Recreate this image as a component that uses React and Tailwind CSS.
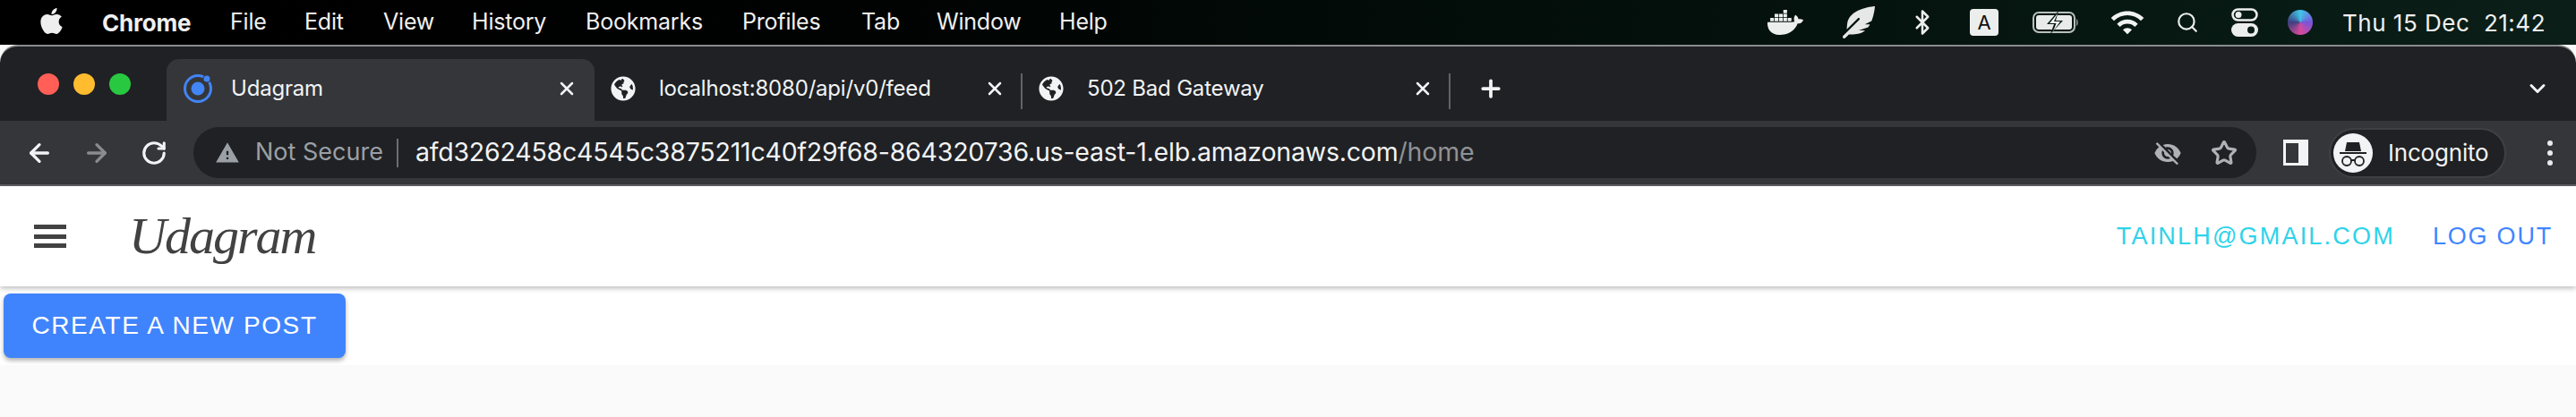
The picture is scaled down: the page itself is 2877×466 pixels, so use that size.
import React from 'react';
import { X, Plus, ChevronDown, ArrowLeft, ArrowRight, RotateCw, Star, Bluetooth, Search } from 'lucide-react';
import { FaApple, FaDocker, FaGlobeAmericas, FaFeatherAlt } from 'react-icons/fa';
import { MdWarning, MdVisibilityOff, MdWifi } from 'react-icons/md';

const menuItems = [
  { label: 'File', w: 'w-[41px]' },
  { label: 'Edit', w: 'w-[46px]' },
  { label: 'View', w: 'w-[57px]' },
  { label: 'History', w: 'w-[85px]' },
  { label: 'Bookmarks', w: 'w-[133px]' },
  { label: 'Profiles', w: 'w-[91px]' },
  { label: 'Tab', w: 'w-[42px]' },
  { label: 'Window', w: 'w-[95px]' },
  { label: 'Help', w: 'w-[55px]' },
];

const IonicIcon = () => (
  <svg width="34" height="34" viewBox="0 0 34 34" fill="none">
    <circle cx="17" cy="17" r="14.5" stroke="#4285f4" strokeWidth="3" />
    <circle cx="17" cy="17" r="7.5" fill="#4285f4" />
    <circle cx="27" cy="6" r="4.5" fill="#35363a" />
    <circle cx="27" cy="6" r="3.5" fill="#4285f4" />
  </svg>
);

const Battery = () => (
  <svg width="52" height="26" viewBox="0 0 52 26" fill="none">
    <rect x="1" y="2" width="46" height="22" rx="6" stroke="#b8c0bc" strokeWidth="2" />
    <rect x="4" y="5" width="40" height="16" rx="3" fill="#e8ebe9" />
    <path d="M49 9c2 1 2.500 7 0 8z" fill="#8f9693" />
    <path d="M29 0 L16 15 H24 L20 26 L34 11 H26 Z" fill="#0b1d16" />
    <path d="M28 3 L19 14 H26.500 L23 23 L31 12 H24 Z" fill="#f0f2f1" />
  </svg>
);

const ControlCenter = () => (
  <svg width="30" height="32" viewBox="0 0 30 32">
    <rect x="1.500" y="1.500" width="27" height="12" rx="6" fill="none" stroke="#eceeed" strokeWidth="2.500" />
    <circle cx="8" cy="7.500" r="3.500" fill="#eceeed" />
    <rect x="0" y="17" width="30" height="15" rx="7.500" fill="#eceeed" />
    <circle cx="22" cy="24.500" r="4" fill="#0b1d16" />
  </svg>
);

const IncognitoFace = () => (
  <svg width="44" height="44" viewBox="0 0 44 44">
    <circle cx="22" cy="22" r="22" fill="#f1f3f4" />
    <path d="M15 10 h14 l2 10 h-18 z" fill="#202124" />
    <rect x="7" y="21" width="30" height="2" fill="#202124" />
    <circle cx="15" cy="31" r="5" fill="none" stroke="#202124" strokeWidth="1.800" />
    <circle cx="29" cy="31" r="5" fill="none" stroke="#202124" strokeWidth="1.800" />
    <path d="M20 30 h4" stroke="#202124" strokeWidth="1.800" />
  </svg>
);

const Tab = ({ title, icon, active, divider }) => (
  <div
    className={`relative flex h-[69px] w-[478px] shrink-0 items-center pl-[16px] pb-[4px] ${
      active ? 'rounded-t-[14px] bg-[#35363a]' : ''
    }`}
  >
    <div className="flex w-[56px] shrink-0 items-center pl-[2px]">{icon}</div>
    <span className="flex-1 truncate text-[24px] tracking-[-0.2px] text-[#f1f3f4]">{title}</span>
    <X size={24} color="#f1f3f4" strokeWidth={2.500} className="mr-[19px]" />
    {divider && <div className="absolute top-[16px] right-0 h-[40px] w-[2px] bg-[#5f6368]" />}
  </div>
);

const App = () => {
  return (
    <div className="h-[466px] w-[2877px] overflow-hidden bg-[#fafafa] font-['Inter',sans-serif]">
      {/* macOS menu bar */}
      <div className="flex h-[50px] items-center bg-gradient-to-r from-black via-[#020a07] to-[#0b1f18] pl-[41px] text-[25px] text-[#f0f0f0]">
        <FaApple size={33} color="#eeeeee" className="mb-[4px] w-[33px]" />
        <span className="ml-[40px] w-[101px] text-[26px] font-bold tracking-[-0.2px]">Chrome</span>
        <div className="ml-[42px] flex gap-[42px] tracking-[-0.2px]">
          {menuItems.map((m) => (
            <span key={m.label} className={m.w}>{m.label}</span>
          ))}
        </div>
        <div className="ml-auto flex items-center pr-[34px]">
          <FaDocker size={40} color="#eceeed" />
          <FaFeatherAlt size={36} color="#e6e8e7" className="ml-[44px]" />
          <Bluetooth size={30} color="#eceeed" className="ml-[38px]" />
          <span className="ml-[38px] flex h-[30px] w-[32px] items-center justify-center rounded-[4px] bg-[#eceeed] text-[22px] text-[#111]">A</span>
          <div className="ml-[38px]"><Battery /></div>
          <MdWifi size={40} color="#f0f2f1" className="ml-[34px]" />
          <Search size={26} color="#eceeed" className="ml-[34px]" />
          <div className="ml-[36px]"><ControlCenter /></div>
          <div className="ml-[33px] h-[28px] w-[28px] rounded-full bg-[conic-gradient(#3fc5e8,#7a55d8,#d84a9a,#3f3f80,#3fc5e8)]" />
          <span className="ml-[33px] whitespace-pre text-[26px] tracking-[0.5px]">Thu 15 Dec  21:42</span>
        </div>
      </div>

      {/* Chrome window */}
      <div className="overflow-hidden rounded-t-[20px] border-t-2 border-[#8a8b8d] bg-[#202124]">
        <div className="flex h-[83px] items-end">
          <div className="flex h-[69px] w-[186px] shrink-0 items-start gap-[16px] pl-[42px] pt-[16px]">
            <div className="h-[24px] w-[24px] rounded-full bg-[#ff5f57]" />
            <div className="h-[24px] w-[24px] rounded-full bg-[#febc2e]" />
            <div className="h-[24px] w-[24px] rounded-full bg-[#28c840]" />
          </div>
          <Tab active title="Udagram" icon={<IonicIcon />} />
          <Tab divider title="localhost:8080/api/v0/feed" icon={<FaGlobeAmericas size={28} color="#f1f3f4" />} />
          <Tab divider title="502 Bad Gateway" icon={<FaGlobeAmericas size={28} color="#f1f3f4" />} />
          <div className="flex h-[69px] flex-1 items-center pb-[4px] pl-[30px] pr-[29px]">
            <Plus size={30} color="#f1f3f4" strokeWidth={3} />
            <ChevronDown size={28} color="#f1f3f4" strokeWidth={2.500} className="ml-auto" />
          </div>
        </div>

        {/* toolbar */}
        <div className="flex h-[73px] items-center border-b-2 border-[#5f6063] bg-[#35363a] pl-[28px] pr-[26px]">
          <ArrowLeft size={32} color="#f1f3f4" strokeWidth={2.500} />
          <ArrowRight size={32} color="#8a8b8f" strokeWidth={2.500} className="ml-[32px]" />
          <RotateCw size={30} color="#f1f3f4" strokeWidth={2.500} className="ml-[33px]" />
          <div className="ml-[29px] flex h-[57px] w-[2304px] shrink-0 items-center rounded-full bg-[#202124] pl-[24px]">
            <MdWarning size={28} color="#9aa0a6" />
            <span className="ml-[17px] text-[27px] text-[#9aa0a6]">Not Secure</span>
            <div className="ml-[15px] h-[32px] w-[2px] bg-[#6b6e72]" />
            <span className="ml-[19px] text-[28.500px] tracking-[-0.2px] text-[#f1f3f4]">
              afd3262458c4545c3875211c40f29f68-864320736.us-east-1.elb.amazonaws.com
              <span className="text-[#8f9296]">/home</span>
            </span>
            <MdVisibilityOff size={32} color="#aeb1b5" className="ml-auto" />
            <Star size={30} color="#aeb1b5" strokeWidth={2.500} className="ml-[32px] mr-[21px]" />
          </div>
          <div className="ml-[30px] flex h-[29px] w-[28px] items-center justify-start bg-[#f1f3f4] pl-[3px]">
            <div className="h-[22px] w-[14px] bg-[#35363a]" />
          </div>
          <div className="ml-[23px] flex h-[56px] w-[198px] items-center rounded-full border-2 border-[#3f4044] bg-[#202124] pl-[3px]">
            <IncognitoFace />
            <span className="ml-[17px] text-[26px] tracking-[-0.2px] text-[#f1f3f4]">Incognito</span>
          </div>
          <div className="ml-auto flex flex-col gap-[5px]">
            <div className="h-[6px] w-[6px] rounded-full bg-[#e8eaed]" />
            <div className="h-[6px] w-[6px] rounded-full bg-[#e8eaed]" />
            <div className="h-[6px] w-[6px] rounded-full bg-[#e8eaed]" />
          </div>
        </div>
      </div>

      {/* App toolbar */}
      <header className="relative flex h-[112px] items-center bg-white pl-[38px] pr-[26px] font-['Liberation_Sans',sans-serif] shadow-[0_2px_6px_rgba(0,0,0,0.28)]">
        <div className="flex w-[36px] flex-col gap-[5.500px]">
          <div className="h-[5px] bg-[#424242]" />
          <div className="h-[5px] bg-[#424242]" />
          <div className="h-[5px] bg-[#424242]" />
        </div>
        <span className="ml-[70px] font-['Liberation_Serif',serif] text-[58px] italic leading-none tracking-[-2px] text-[#424242]">Udagram</span>
        <span className="ml-auto text-[27px] tracking-[2.200px] text-[#2dd3ea]">TAINLH@GMAIL.COM</span>
        <span className="ml-[42px] text-[27px] tracking-[1.800px] text-[#3f85ff]">LOG OUT</span>
      </header>

      {/* Page content */}
      <div className="h-[88px] bg-white px-[4px] pt-[8px] font-['Liberation_Sans',sans-serif]">
        <button className="flex h-[72px] w-[382px] items-center justify-center rounded-[8px] bg-[#3f84fd] text-[28px] tracking-[1.600px] text-white shadow-[0_3px_5px_rgba(0,0,0,0.3)]">
          CREATE A NEW POST
        </button>
      </div>
    </div>
  );
};

export default App;
